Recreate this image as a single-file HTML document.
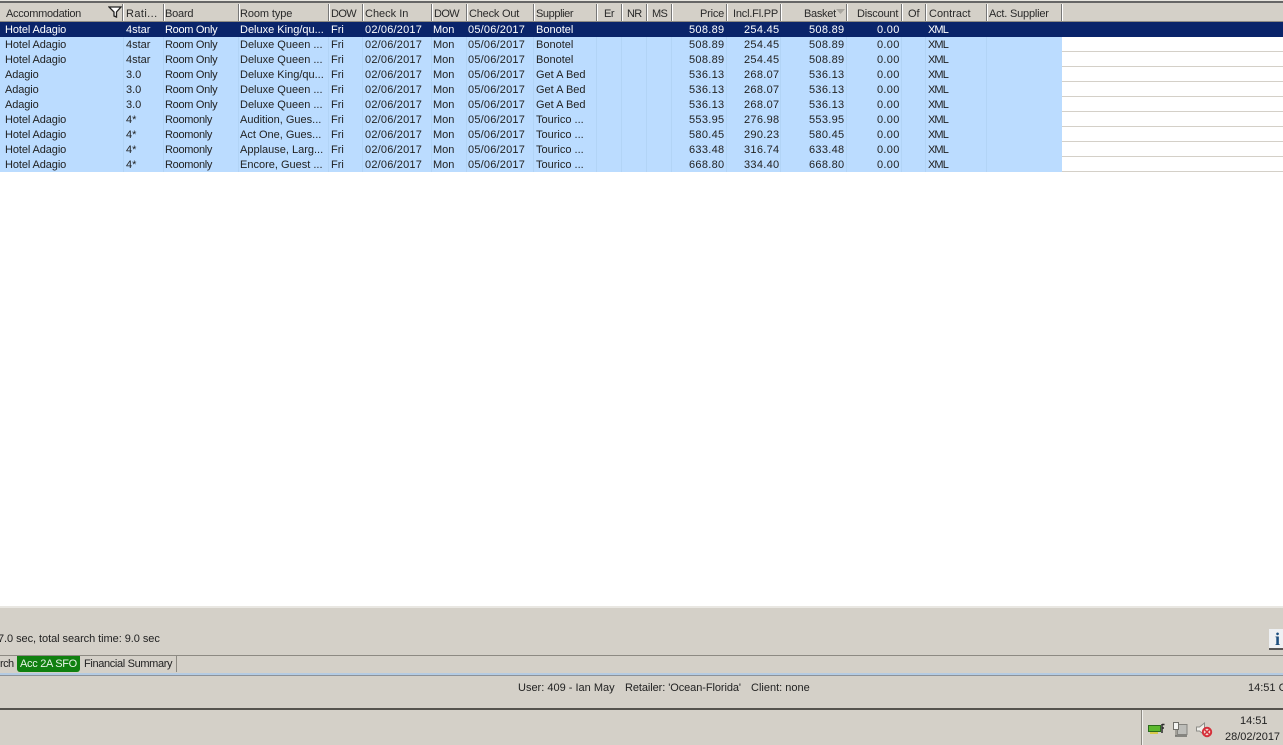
<!DOCTYPE html>
<html><head><meta charset="utf-8">
<style>
html,body{margin:0;padding:0;background:#fff}
#p{position:relative;width:1283px;height:745px;overflow:hidden;background:#fff;font:11px/15px "Liberation Sans",sans-serif;color:#222}
#p div{position:absolute;white-space:nowrap}
.h{top:5px;height:18px;line-height:18px;color:#2a2a2a}
.s{top:4px;height:17px;width:1px;background:#fff;border-left:1px solid #777}
.b{left:0;width:1062px;height:15px;background:#bbdcff}
.l{left:1062px;width:221px;height:1px;background:#d4d0c8}
.v{top:37px;width:1px;height:135px;background:#b2d4f6}
.c{height:15px;line-height:15px;margin-top:1px}
.rw{left:0;width:1062px;height:15px;line-height:15px;margin-top:1px}
.sel{color:#fff}
.rw div:nth-child(1){left:5px;letter-spacing:-.1px}
.rw div:nth-child(2){left:126px}
.rw div:nth-child(3){left:165px;letter-spacing:-.3px}
.rw div:nth-child(4){left:240px}
.rw div:nth-child(5){left:331px}
.rw div:nth-child(6){left:365px;letter-spacing:.2px}
.rw div:nth-child(7){left:433px}
.rw div:nth-child(8){left:468px;letter-spacing:.2px}
.rw div:nth-child(9){left:536px}
.rw div:nth-child(10){left:689px;letter-spacing:.3px}
.rw div:nth-child(11){left:744px;letter-spacing:.3px}
.rw div:nth-child(12){left:809px;letter-spacing:.3px}
.rw div:nth-child(13){left:877px;letter-spacing:.3px}
.rw div:nth-child(14){left:928px;letter-spacing:-.9px}
</style></head><body><div id="p">
<div style="left:0;top:0;width:1283px;height:1px;background:#e8e6e0"></div>
<div style="left:0;top:1px;width:1283px;height:2px;background:#666"></div>
<div style="left:0;top:3px;width:1283px;height:19px;background:#d4d0c8"></div>
<div style="left:0;top:21px;width:1283px;height:1px;background:#8f8c85"></div>

<div class="h" style="left:6px;letter-spacing:-.3px">Accommodation</div>
<svg style="position:absolute;left:108px;top:6px" width="14" height="12"><path d="M1 1H13L8.500 6V11L6 10V6Z" fill="#fff" stroke="#222" stroke-width="1.300"/></svg>
<div class="h" style="left:126px;letter-spacing:.4px">Rati...</div>
<div class="h" style="left:165px;letter-spacing:-.2px">Board</div>
<div class="h" style="left:240px;letter-spacing:-.1px">Room type</div>
<div class="h" style="left:331px;letter-spacing:-.6px">DOW</div>
<div class="h" style="left:365px">Check In</div>
<div class="h" style="left:434px;letter-spacing:-.6px">DOW</div>
<div class="h" style="left:469px;letter-spacing:-.2px">Check Out</div>
<div class="h" style="left:536px;letter-spacing:-.4px">Supplier</div>
<div class="h" style="left:604px;letter-spacing:-.5px">Er</div>
<div class="h" style="left:627px;letter-spacing:-.7px">NR</div>
<div class="h" style="left:652px;letter-spacing:-.7px">MS</div>
<div class="h" style="left:700px;letter-spacing:-.2px">Price</div>
<div class="h" style="left:733px;letter-spacing:-.2px">Incl.Fl.PP</div>
<div class="h" style="left:804px;letter-spacing:-.3px">Basket</div>
<svg style="position:absolute;left:836px;top:9px" width="10" height="6"><path d="M0 0H9L4.500 5Z" fill="#a9a69f"/></svg>
<div class="h" style="left:857px;letter-spacing:-.2px">Discount</div>
<div class="h" style="left:908px">Of</div>
<div class="h" style="left:929px">Contract</div>
<div class="h" style="left:989px;letter-spacing:-.2px">Act. Supplier</div>
<div class="s" style="left:122px"></div><div class="s" style="left:163px"></div><div class="s" style="left:238px"></div><div class="s" style="left:328px"></div><div class="s" style="left:362px"></div><div class="s" style="left:431px"></div><div class="s" style="left:466px"></div><div class="s" style="left:533px"></div><div class="s" style="left:596px"></div><div class="s" style="left:621px"></div><div class="s" style="left:646px"></div><div class="s" style="left:671px"></div><div class="s" style="left:726px"></div><div class="s" style="left:780px"></div><div class="s" style="left:846px"></div><div class="s" style="left:901px"></div><div class="s" style="left:925px"></div><div class="s" style="left:986px"></div><div class="s" style="left:1061px"></div>

<div style="left:0;top:22px;width:1283px;height:15px;background:#0a246a"></div>
<div class="b" style="top:37px;height:135px"></div>
<div class="v" style="left:123px"></div><div class="v" style="left:163px"></div><div class="v" style="left:238px"></div><div class="v" style="left:328px"></div><div class="v" style="left:362px"></div><div class="v" style="left:431px"></div><div class="v" style="left:466px"></div><div class="v" style="left:533px"></div><div class="v" style="left:596px"></div><div class="v" style="left:621px"></div><div class="v" style="left:646px"></div><div class="v" style="left:671px"></div><div class="v" style="left:726px"></div><div class="v" style="left:780px"></div><div class="v" style="left:846px"></div><div class="v" style="left:901px"></div><div class="v" style="left:925px"></div><div class="v" style="left:986px"></div>
<div class="l" style="top:51px"></div><div class="l" style="top:66px"></div><div class="l" style="top:81px"></div><div class="l" style="top:96px"></div><div class="l" style="top:111px"></div><div class="l" style="top:126px"></div><div class="l" style="top:141px"></div><div class="l" style="top:156px"></div><div class="l" style="top:171px"></div>

<div class="rw sel" style="top:22px"><div>Hotel Adagio</div><div>4star</div><div>Room Only</div><div>Deluxe King/qu...</div><div>Fri</div><div>02/06/2017</div><div>Mon</div><div>05/06/2017</div><div>Bonotel</div><div>508.89</div><div>254.45</div><div>508.89</div><div>0.00</div><div>XML</div></div>
<div class="rw" style="top:37px"><div>Hotel Adagio</div><div>4star</div><div>Room Only</div><div>Deluxe Queen ...</div><div>Fri</div><div>02/06/2017</div><div>Mon</div><div>05/06/2017</div><div>Bonotel</div><div>508.89</div><div>254.45</div><div>508.89</div><div>0.00</div><div>XML</div></div>
<div class="rw" style="top:52px"><div>Hotel Adagio</div><div>4star</div><div>Room Only</div><div>Deluxe Queen ...</div><div>Fri</div><div>02/06/2017</div><div>Mon</div><div>05/06/2017</div><div>Bonotel</div><div>508.89</div><div>254.45</div><div>508.89</div><div>0.00</div><div>XML</div></div>
<div class="rw" style="top:67px"><div>Adagio</div><div>3.0</div><div>Room Only</div><div>Deluxe King/qu...</div><div>Fri</div><div>02/06/2017</div><div>Mon</div><div>05/06/2017</div><div>Get A Bed</div><div>536.13</div><div>268.07</div><div>536.13</div><div>0.00</div><div>XML</div></div>
<div class="rw" style="top:82px"><div>Adagio</div><div>3.0</div><div>Room Only</div><div>Deluxe Queen ...</div><div>Fri</div><div>02/06/2017</div><div>Mon</div><div>05/06/2017</div><div>Get A Bed</div><div>536.13</div><div>268.07</div><div>536.13</div><div>0.00</div><div>XML</div></div>
<div class="rw" style="top:97px"><div>Adagio</div><div>3.0</div><div>Room Only</div><div>Deluxe Queen ...</div><div>Fri</div><div>02/06/2017</div><div>Mon</div><div>05/06/2017</div><div>Get A Bed</div><div>536.13</div><div>268.07</div><div>536.13</div><div>0.00</div><div>XML</div></div>
<div class="rw" style="top:112px"><div>Hotel Adagio</div><div>4*</div><div>Roomonly</div><div>Audition, Gues...</div><div>Fri</div><div>02/06/2017</div><div>Mon</div><div>05/06/2017</div><div>Tourico ...</div><div>553.95</div><div>276.98</div><div>553.95</div><div>0.00</div><div>XML</div></div>
<div class="rw" style="top:127px"><div>Hotel Adagio</div><div>4*</div><div>Roomonly</div><div>Act One, Gues...</div><div>Fri</div><div>02/06/2017</div><div>Mon</div><div>05/06/2017</div><div>Tourico ...</div><div>580.45</div><div>290.23</div><div>580.45</div><div>0.00</div><div>XML</div></div>
<div class="rw" style="top:142px"><div>Hotel Adagio</div><div>4*</div><div>Roomonly</div><div>Applause, Larg...</div><div>Fri</div><div>02/06/2017</div><div>Mon</div><div>05/06/2017</div><div>Tourico ...</div><div>633.48</div><div>316.74</div><div>633.48</div><div>0.00</div><div>XML</div></div>
<div class="rw" style="top:157px"><div>Hotel Adagio</div><div>4*</div><div>Roomonly</div><div>Encore, Guest ...</div><div>Fri</div><div>02/06/2017</div><div>Mon</div><div>05/06/2017</div><div>Tourico ...</div><div>668.80</div><div>334.40</div><div>668.80</div><div>0.00</div><div>XML</div></div>

<div style="left:0;top:606px;width:1283px;height:139px;background:#d4d0c8"></div>
<div style="left:0;top:606px;width:1283px;height:2px;background:#e9e7e2"></div>
<div class="c" style="left:-2px;top:631px;letter-spacing:-.06px">7.0 sec, total search time: 9.0 sec</div>

<div style="left:1269px;top:629px;width:14px;height:19px;background:#eef0f3;border-bottom:2px solid #555"></div>
<div style="left:1275px;top:629px;height:20px;font:bold 18px/20px 'Liberation Serif',serif;color:#1c4e7e">i</div>

<div style="left:0;top:655px;width:1283px;height:1px;background:#8d8a83"></div>
<div class="c" style="left:0;top:656px;letter-spacing:-.6px">rch</div>
<div style="left:17px;top:656px;width:63px;height:16px;background:#108010;border-radius:0 0 3px 3px"></div>
<div class="c" style="left:20px;top:656px;color:#e8f4e8;letter-spacing:-.3px">Acc 2A SFO</div>
<div class="c" style="left:84px;top:656px;letter-spacing:-.35px">Financial Summary</div>
<div style="left:176px;top:656px;width:1px;height:16px;background:#8d8a83"></div>
<div style="left:0;top:673px;width:1283px;height:2px;background:#b4cbe3"></div>
<div style="left:0;top:675px;width:1283px;height:1px;background:#8d9299"></div>

<div class="c" style="left:518px;top:680px">User: 409 - Ian May</div>
<div class="c" style="left:625px;top:680px;letter-spacing:-.08px">Retailer: 'Ocean-Florida'</div>
<div class="c" style="left:751px;top:680px">Client: none</div>
<div class="c" style="left:1248px;top:680px">14:51 C</div>

<div style="left:0;top:708px;width:1283px;height:2px;background:#55534e"></div>
<div style="left:1141px;top:710px;width:1px;height:35px;background:#8d8a83"></div>
<div style="left:1142px;top:710px;width:1px;height:35px;background:#f2f1ee"></div>

<svg style="position:absolute;left:1147px;top:722px" width="18" height="13">
<path d="M1.500 3.500H13.500V9.500H1.500Z" fill="#5cb82e" stroke="#2c6a1c"/><path d="M3 10V12H11V10" fill="#d8c94a"/><path d="M15 2V11M15 2.500H17.500M15 6H17" stroke="#2a2a2a" stroke-width="1.500" fill="none"/>
</svg>
<svg style="position:absolute;left:1171px;top:721px" width="18" height="17">
<rect x="6.500" y="3.500" width="9.500" height="10" fill="#bdbdb9" stroke="#85847f"/><path d="M4 15H16" stroke="#85847f" stroke-width="2"/>
<path d="M2.500 1.500H7.500V8.500H2.500Z" fill="#f4f4f2" stroke="#6f6e69"/><path d="M5 8.500V15" stroke="#6f6e69"/>
</svg>
<svg style="position:absolute;left:1195px;top:721px" width="19" height="17">
<path d="M1.500 6H4.500L9.500 2V14L4.500 10H1.500Z" fill="#f0efeb" stroke="#8d8c87"/>
<circle cx="12" cy="11" r="4.200" fill="#f3d7d2" stroke="#d5303a" stroke-width="2"/><path d="M9.500 8.500L14.500 13.500M14.500 8.500L9.500 13.500" stroke="#d5303a" stroke-width="1.500"/>
</svg>
<div class="c" style="left:1240px;top:713px">14:51</div>
<div class="c" style="left:1225px;top:729px">28/02/2017</div>
</div></body></html>
